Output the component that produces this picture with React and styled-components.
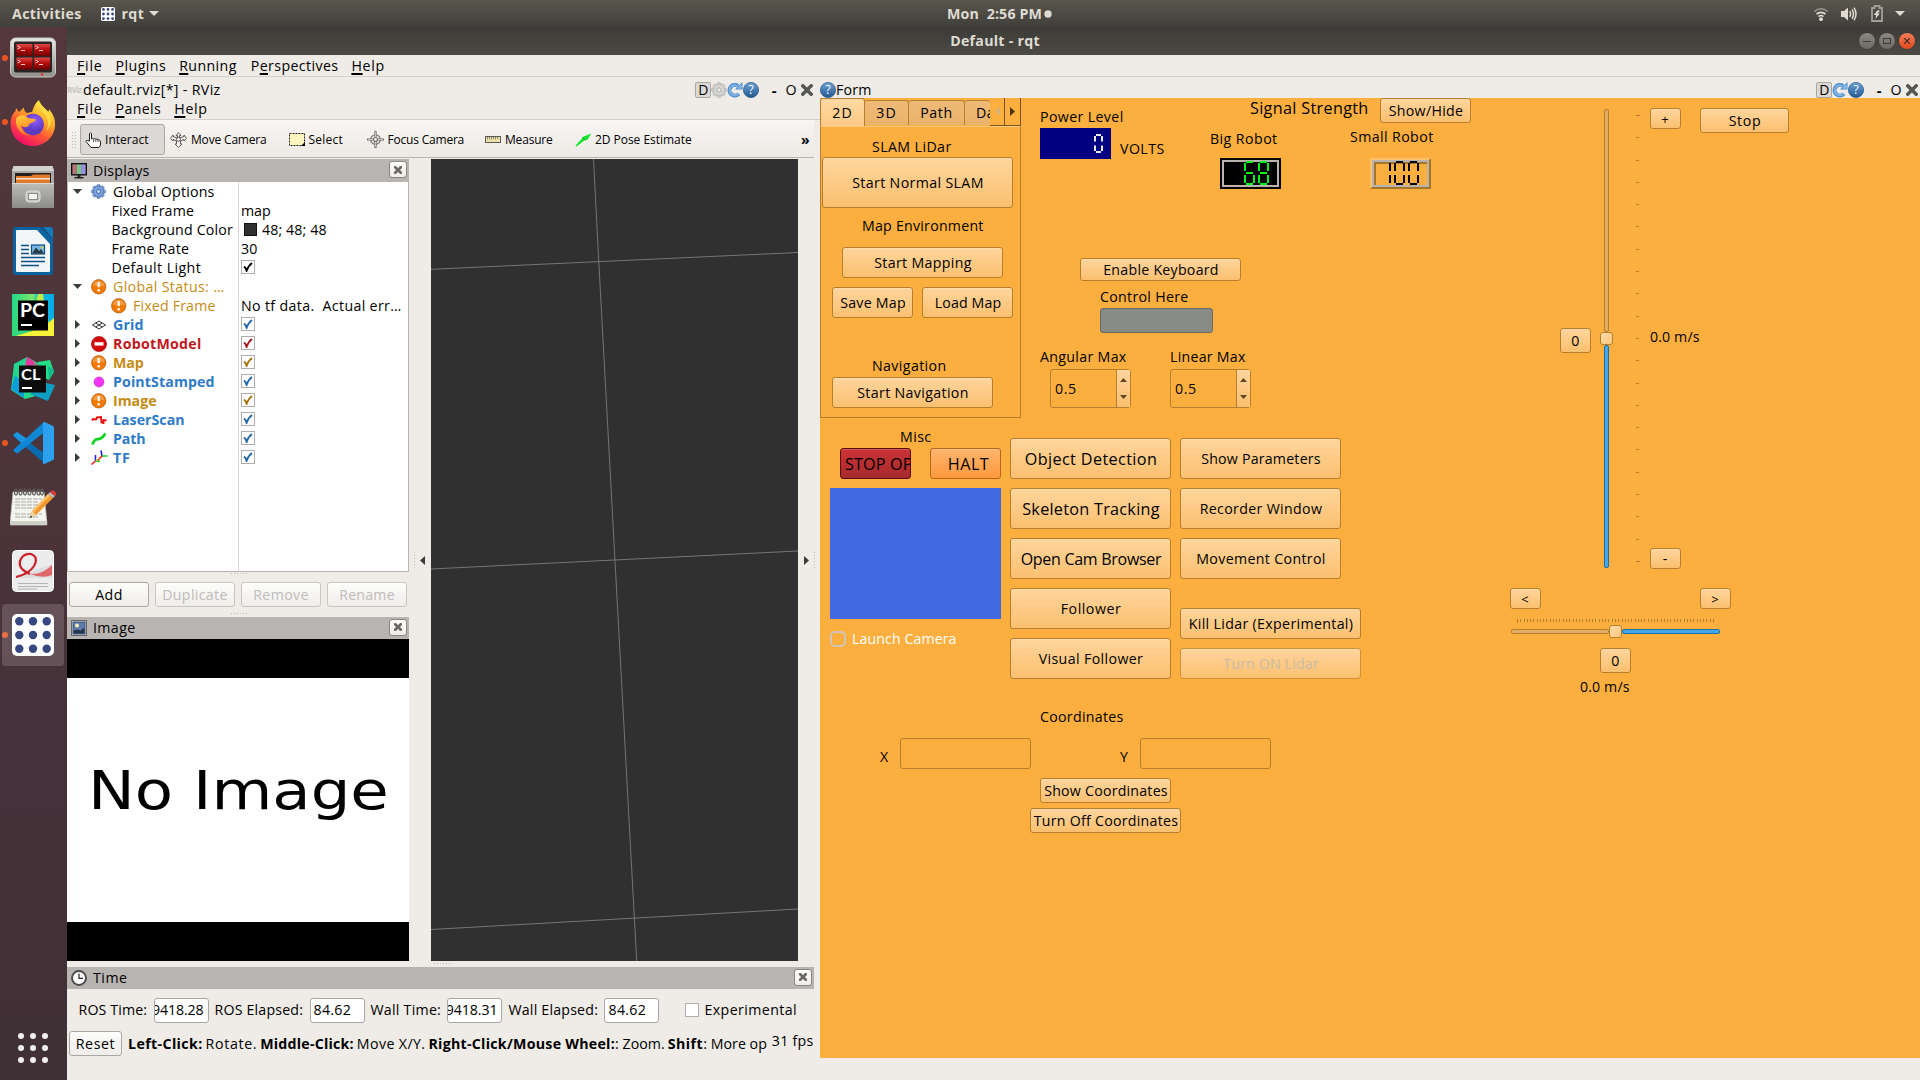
import React, { useLayoutEffect, useRef } from "react";
import styled, { createGlobalStyle, css } from "styled-components";

const Global = createGlobalStyle`
  * { box-sizing: border-box; }
  body { margin: 0; width: 1920px; height: 1080px; overflow: hidden; background: #efebe7; }
  svg { display: block; flex: none; }
`;

const ORANGE = "#fcaf3e";

/* ---------- text ---------- */

const TextSpan = styled.span`
  display: inline-block;
  flex: none;
  white-space: pre;
  font-size: ${(p) => p.$size || 14.2}px;
  font-weight: ${(p) => (p.$bold ? 700 : 400)};
  color: ${(p) => p.$color || "inherit"};
  line-height: 20px;
  height: 20px;
  margin-top: ${(p) => p.$mt || 0}px;
  margin-left: ${(p) => p.$ml || 0}px;
`;

/* Tracks the glyphs so that the run takes up a given width. */
function Text({ w, size, bold, color, mt, ml, children }) {
  const ref = useRef(null);
  useLayoutEffect(() => {
    const el = ref.current;
    if (!w) return;
    el.style.letterSpacing = "0px";
    const natural = el.getBoundingClientRect().width;
    const count = el.textContent.length;
    el.style.letterSpacing = `${(w + 1.6 - natural) / count}px`;
  }, [w, children]);
  return (
    <TextSpan ref={ref} $size={size} $bold={bold} $color={color} $mt={mt} $ml={ml}>
      {children}
    </TextSpan>
  );
}

const U = styled.span`
  text-decoration: underline;
  text-underline-offset: 2px;
  text-decoration-thickness: 1.5px;
`;

/* ---------- generic boxes ---------- */

const Row = styled.div`
  display: flex;
  flex: none;
  align-items: ${(p) => p.$align || "flex-start"};
  gap: ${(p) => p.$gap || 0}px;
  margin: ${(p) => p.$mt || 0}px 0 0 ${(p) => p.$ml || 0}px;
  ${(p) => p.$w && css`width: ${p.$w}px;`}
  ${(p) => p.$h && css`height: ${p.$h}px;`}
`;

const Col = styled(Row)`
  flex-direction: column;
`;

const Screen = styled.div`
  width: 1920px;
  height: 1080px;
  display: flex;
  flex-direction: column;
  background: #efebe7;
  color: #000;
  font-family: "Open Sans", "Noto Sans", sans-serif;
  overflow: hidden;
`;

/* ---------- top bar ---------- */

const TopBar = styled.header`
  height: 27px;
  flex: none;
  display: flex;
  align-items: center;
  color: #dfdbd2;
  padding: 0 15px 0 12px;
  background: linear-gradient(#5a564d, #403f3a);
`;
const TopLeft = styled.div`
  width: 935px;
  display: flex;
  align-items: center;
`;
const TopRight = styled.div`
  margin-left: auto;
  display: flex;
  align-items: center;
`;

function Triangle({ w = 10, h = 5, dir = "down", color = "#dfdbd2", ml = 0 }) {
  const pts = {
    down: `0,0 ${w},0 ${w / 2},${h}`,
    up: `0,${h} ${w},${h} ${w / 2},0`,
    right: `0,0 ${w},${h / 2} 0,${h}`,
    left: `${w},0 0,${h / 2} ${w},${h}`,
  }[dir];
  return (
    <Row $ml={ml}>
      <svg width={w} height={h}><polygon points={pts} fill={color} /></svg>
    </Row>
  );
}

function RqtIcon({ size }) {
  const c = [7.3, 21, 34.7];
  return (
    <svg width={size} height={size} viewBox="0 0 42 42">
      <rect width="42" height="42" rx="5" fill="#fff" />
      {c.map((y) => c.map((x) => <circle key={x + "-" + y} cx={x} cy={y} r="4.2" fill="#37477f" />))}
    </svg>
  );
}

function WifiIcon() {
  return (
    <svg width="16" height="16" viewBox="0 0 16 16" fill="none" stroke="#dfdbd2" strokeWidth="1.7">
      <path d="M1.3 5.6a9.6 9.6 0 0 1 13.4 0" opacity=".45" />
      <path d="M3.5 8.2a6.4 6.4 0 0 1 9 0" />
      <path d="M5.6 10.6a3.4 3.4 0 0 1 4.8 0" />
      <circle cx="8" cy="13.2" r="1.9" fill="#dfdbd2" stroke="none" />
    </svg>
  );
}
function VolumeIcon() {
  return (
    <svg width="16" height="16" viewBox="0 0 16 16" fill="none" stroke="#dfdbd2" strokeWidth="1.5">
      <path d="M0 5h3l4-3.5v13L3 11H0z" fill="#dfdbd2" stroke="none" />
      <path d="M8.7 5.2q1.8 2.8 0 5.6M11 3.4q3 4.6 0 9.2M13 1.6q4 6.4 0 12.8" />
    </svg>
  );
}
function BatteryIcon() {
  return (
    <svg width="12" height="17" viewBox="0 0 12 17">
      <path d="M1 3h2.5V1h5v2H11v13H1z" fill="none" stroke="#a19f98" strokeWidth="1.8" />
      <path d="M6.8 5L2.8 10h2.4l-.8 4 4.4-5.4H6.2L9 6z" fill="#dfdbd2" />
    </svg>
  );
}

/* ---------- dock ---------- */

const Body = styled.div`
  flex: 1;
  min-height: 0;
  display: flex;
`;
const Dock = styled.nav`
  width: 67px;
  flex: none;
  display: flex;
  flex-direction: column;
  background: linear-gradient(#53373c, #4b3439 45%, #45313a 65%, #403136);
`;
const DockTile = styled.div`
  height: 64px;
  flex: none;
  display: flex;
  align-items: center;
  padding-bottom: ${(p) => p.$lift || 0}px;
`;
const RunDot = styled.span`
  width: 6px;
  height: 6px;
  flex: none;
  border-radius: 50%;
  background: ${(p) => (p.$on ? "#e95420" : "transparent")};
`;
const DockFace = styled.div`
  width: 62px;
  height: 62px;
  flex: none;
  display: grid;
  place-items: center;
  border-radius: 4px;
  margin-left: -6px;
  background: ${(p) => (p.$active ? "rgba(255,255,255,.16)" : "transparent")};
`;
const DockInner = styled.div`
  display: flex;
  align-items: center;
  padding-left: 2px;
`;

function Terminator() {
  return (
    <svg width="46" height="42" viewBox="0 0 46 42">
      <defs>
        <linearGradient id="tr" x2="0" y2="1"><stop stopColor="#e04a4a" /><stop offset=".45" stopColor="#b80d0d" /><stop offset="1" stopColor="#6d0000" /></linearGradient>
        <linearGradient id="tf" x2="0" y2="1"><stop stopColor="#e6e6e2" /><stop offset="1" stopColor="#8f8f8b" /></linearGradient>
      </defs>
      <rect x=".5" y="1" width="45" height="39" rx="5" fill="url(#tf)" stroke="#c9c9c5" />
      <rect x="4" y="4.5" width="38" height="31" rx="2" fill="#2b2422" />
      <g fill="url(#tr)">
        <rect x="6.5" y="7" width="16" height="12" /><rect x="24" y="7" width="16" height="12" />
        <rect x="6.5" y="20.500" width="16" height="12" /><rect x="24" y="20.500" width="16" height="12" />
      </g>
      <g fill="none" stroke="#f3c6c6" strokeWidth="1">
        <path d="M7.500 9l3 1.500-3 1.500M11 13.500h4M25.500 9l3 1.500-3 1.500M29 13.500h4M7.500 23l3 1.500-3 1.500M11 27.500h4M25.500 23l3 1.500-3 1.500M29 27.500h4" />
      </g>
      <circle cx="32" cy="37.500" r="1.200" fill="#e22" />
    </svg>
  );
}
function Firefox() {
  return (
    <svg width="46" height="47" viewBox="0 0 46 47">
      <defs>
        <linearGradient id="ff1" x1=".85" y1=".05" x2=".3" y2="1"><stop stopColor="#fff44f" /><stop offset=".35" stopColor="#ffb02a" /><stop offset=".62" stopColor="#ff5a33" /><stop offset="1" stopColor="#f0096b" /></linearGradient>
        <radialGradient id="ff2" cx=".6" cy=".3"><stop stopColor="#9059ff" /><stop offset="1" stopColor="#5b3bc0" /></radialGradient>
        <linearGradient id="ff3" x2=".4" y2="1"><stop stopColor="#ffd23c" /><stop offset="1" stopColor="#ff7a24" /></linearGradient>
      </defs>
      <path d="M29 1c1 5 6 8 9 12 1-1 1-2 1-3 4 5 6.500 10 6 17-1 12-11 20-22.500 20S1 38 .5 26C.300 19 3 14 5.500 12l.5-3c1.500 1 2 3 3 4l5-4.500c0 3 1 4.500 3 5.500l5-1c2-5 3-9 7-12z" fill="url(#ff1)" />
      <circle cx="23" cy="25.500" r="10.800" fill="url(#ff2)" />
      <path d="M30 3c-1 5 2 8 5 12 4 6 4 12 1 17 5-4 6-11 3-18C36 9 31 7 30 3z" fill="#ffe04a" opacity=".8" />
      <path d="M6 20c3-5 9-4.500 12-1 3 1 7 0 8 2-2 3-6 2.500-7 5-1 3-6 3-8 0 0 5 4 9 10 10-8 2-16-6-15-16z" fill="url(#ff3)" />
    </svg>
  );
}
function Files() {
  return (
    <svg width="42" height="44" viewBox="0 0 42 44">
      <defs><linearGradient id="fg" x2="0" y2="1"><stop stopColor="#bdbdbb" /><stop offset="1" stopColor="#8b8b89" /></linearGradient></defs>
      <path d="M1.500 1h39L42 6v37H0V6z" fill="#a9a9a7" />
      <path d="M1.500 1h39L42 6H0z" fill="#d2d2d0" />
      <rect x="3" y="8" width="36" height="10" fill="#26211f" />
      <path d="M4 11h15l2-1.500h17V18H4z" fill="#e07b2c" />
      <rect x="4" y="13" width="34" height="1.500" fill="#fbe2c8" />
      <path d="M0 18h42v25H0z" fill="url(#fg)" />
      <path d="M0 18h42v1H0z" fill="#d8d8d6" />
      <rect x="14" y="26" width="14" height="11" rx="3" fill="#c6c6c4" stroke="#dededc" />
      <rect x="16.500" y="28.500" width="9" height="6" fill="#f4f4f2" stroke="#8a8a88" />
    </svg>
  );
}
function Writer() {
  return (
    <svg width="40" height="48" viewBox="0 0 40 48">
      <path d="M3 0h25l12 12v33q0 3-3 3H3q-3 0-3-3V3q0-3 3-3z" fill="#0b639f" />
      <path d="M28 0h12v12z" fill="#0a4776" /><path d="M30 0h7q3 0 3 3v9z" fill="#1579b8" />
      <path d="M3 4q0-1 1-1h20l13 14v27q0 1-1 1H4q-1 0-1-1z" fill="#f3f6f8" />
      <path d="M8 18.500h8M8 22.500h8M8 26.500h8M8 30.500h24M8 34.500h24M8 38.500h18" stroke="#0b5184" strokeWidth="1.700" />
      <rect x="18.500" y="18" width="13" height="9" fill="#76b7e8" stroke="#0b5184" strokeWidth="1.200" />
      <path d="M19 26.500l4-6 3 3.500 2-2 3 4.500z" fill="#2b3b40" />
      <circle cx="29" cy="20.500" r="1.200" fill="#f7cf2e" />
    </svg>
  );
}
function PyCharm() {
  return (
    <svg width="42" height="42" viewBox="0 0 42 42">
      <defs><linearGradient id="pc"><stop stopColor="#21d789" /><stop offset=".5" stopColor="#7fe66c" /><stop offset=".6" stopColor="#12c4d8" /><stop offset="1" stopColor="#07a9e8" /></linearGradient></defs>
      <rect width="42" height="42" fill="url(#pc)" />
      <path d="M0 26L28 0l4 8 5 20 5 2v12H0z" fill="#35d77c" />
      <path d="M42 24v18H4l26-8z" fill="#f6f23a" /><path d="M26 0h5l1 8-8 1z" fill="#c6ec44" />
      <rect x="6" y="6.500" width="30" height="30" fill="#000" />
      <text x="8" y="22.500" fontSize="18" fontWeight="700" fontFamily="Lato, Open Sans, sans-serif" fill="#fff" textLength="25" lengthAdjust="spacingAndGlyphs">PC</text>
      <rect x="9" y="30" width="11" height="2" fill="#fff" />
    </svg>
  );
}
function CLion() {
  return (
    <svg width="46" height="46" viewBox="0 0 46 46">
      <path d="M4 8L17 1l11 6-4 12 14 10-5 9-18 5L1 34z" fill="#22d88f" />
      <path d="M28 6l12-2 4 12-5 8-13-6z" fill="#22dc86" />
      <path d="M1 33L5 20l9 6v16z" fill="#0a9fd8" />
      <path d="M20 38l16-11 9 2-7 16z" fill="#0b9fc4" /><path d="M38 10l6 4-5 9z" fill="#11b98e" />
      <path d="M17 1l8 5-3 6-7-3z" fill="#e0389c" /><path d="M25 6l4 4-6 2z" fill="#a7787f" />
      <rect x="9" y="9.500" width="27" height="27" fill="#0c0c0c" />
      <text x="11" y="23.500" fontSize="15" fontWeight="700" fontFamily="Lato, Open Sans, sans-serif" fill="#fff" textLength="19.500" lengthAdjust="spacingAndGlyphs">CL</text>
      <rect x="12" y="31" width="10" height="2" fill="#fff" />
    </svg>
  );
}
function Code() {
  return (
    <svg width="42" height="42" viewBox="0 0 42 42">
      <path d="M1 14l3-3q1-1 2 0l26 20v10z" fill="#0a6cb0" />
      <path d="M1 28l3 3q1 1 2 0L32 11V0z" fill="#0f87d4" />
      <path d="M1 13l3-2.500q1-.5 2 0L15 17l-5.500 4z" fill="#1a96e2" />
      <path d="M31 .300q1-.5 2 0L41 4q1 .5 1 1.500v31q0 1-1 1.500l-8 3.700q-1 .5-2 0z" fill="#2ba1f0" />
      <path d="M31 11.500v19L18.500 21z" fill="#4b3439" />
    </svg>
  );
}
function Gedit() {
  const lines = [12, 15, 18, 21, 27, 30];
  return (
    <svg width="46" height="38" viewBox="0 0 46 38">
      <path d="M3 4h31l3 32q0 1-1 1H1q-1 0-1-1z" fill="#f5f5f0" stroke="#bdbdb5" strokeWidth=".8" />
      <path d="M0 33h37v3q0 1-1 1H1q-1 0-1-1z" fill="#cfcfc8" />
      {[6, 10.5, 15, 19.5, 24, 28.5, 32].map((x) => <ellipse key={x} cx={x} cy="4" rx="1.500" ry="3" fill="none" stroke="#5d5d5a" strokeWidth="1.200" />)}
      {lines.map((y, i) => <path key={y} d={`M5 ${y - 1}h${i % 2 ? 23 : 27}`} stroke="#a8a8a3" strokeWidth="1" strokeDasharray="5 1" />)}
      <path d="M38 6l5 4-17 17-6 3 2-7z" fill="#f29a2e" /><path d="M38 6l2 1.700-17 17L22 23z" fill="#fcc46c" />
      <path d="M22 23l4 4-6 3z" fill="#f0d3a5" /><path d="M20 30l.8-2.500 1.500 1.600z" fill="#222" />
      <path d="M38 6l2-2 5 4-2 2z" fill="#b9b9b9" /><path d="M40 4q2-3 5-.5t0 4.500z" fill="#d83a3a" />
    </svg>
  );
}
function Evince() {
  return (
    <svg width="42" height="42" viewBox="0 0 42 42">
      <rect x=".5" y=".5" width="41" height="41" rx="4" fill="#ececec" stroke="#fff" />
      <path d="M2 28L40 14v14H2z" fill="#dedede" />
      <path d="M6 33.500h30M6 36.500h30M6 39h19" stroke="#b5b5b5" strokeWidth="1" />
      <path d="M40 15Q30 25 18 24q13 5 22 1z" fill="#e0676a" />
      <path d="M18 24Q6 19 8 11q3-8 11-7 8 3 3 12-5 8-18 11" fill="none" stroke="#c9242b" strokeWidth="2.200" />
    </svg>
  );
}
function AppsGrid() {
  const c = [3, 15, 27];
  return (
    <svg width="30" height="30">
      {c.map((y) => c.map((x) => <circle key={x + "-" + y} cx={x} cy={y} r="3" fill="#f2f0ee" />))}
    </svg>
  );
}
const AppsButton = styled.div`
  margin: auto 0 17px 18px;
`;

const DOCK = [
  [<Terminator />, true], [<Firefox />, true], [<Files />], [<Writer />], [<PyCharm />],
  [<CLion />], [<Code />, true], [<Gedit />], [<Evince />], [<RqtIcon size={42} />, true, true],
];

/* ---------- window chrome ---------- */

const Window = styled.main`
  flex: 1;
  min-width: 0;
  display: flex;
  flex-direction: column;
`;
const TitleBar = styled.div`
  height: 28px;
  flex: none;
  display: grid;
  grid-template-columns: 1fr auto 1fr;
  align-items: center;
  padding: 0 5px 0 8px;
  background: linear-gradient(#3c3b37, #4c4a45);
  color: #dfdbd2;
`;
const WinButtons = styled.div`
  justify-self: end;
  display: flex;
  gap: 4px;
`;
const WinButton = styled.span`
  width: 16px;
  height: 16px;
  border-radius: 50%;
  display: grid;
  place-items: center;
  background: ${(p) => (p.$close ? "linear-gradient(#f47c5a, #df4a1c)" : "linear-gradient(#8b8880, #6b6963)")};
  box-shadow: 0 0 0 0.5px #33322e;
`;
const MenuBar = styled.div`
  height: ${(p) => p.$h}px;
  flex: none;
  display: flex;
  align-items: center;
  padding-left: 10px;
  border-bottom: 1px solid #d3d0cc;
`;
const Panels = styled.div`
  flex: 1;
  display: flex;
  min-height: 0;
`;
const DockTitle = styled.div`
  height: 21px;
  flex: none;
  display: flex;
  align-items: center;
  padding: 5px ${(p) => p.$pr}px 0 0;
`;
const TitleTools = styled.div`
  margin-left: auto;
  display: flex;
  align-items: center;
  height: 17px;
`;
const DButton = styled.span`
  width: 16px;
  height: 16px;
  display: grid;
  place-items: center;
  font-size: 14px;
  line-height: 14px;
  border: 1px solid #aaa6a2;
  border-radius: 2px;
  background: #dcd8d5;
`;

function Gear({ size = 16, fill = "#d8d8d6", stroke = "#a9a9a7", hub = "#efebe7" }) {
  return (
    <svg width={size} height={size} viewBox="-8 -8 16 16">
      <g fill={fill} stroke={stroke} strokeWidth=".7">
        {[0, 45, 90, 135].map((a) => <rect key={a} x="-1.700" y="-7.300" width="3.400" height="14.600" rx=".6" transform={`rotate(${a})`} />)}
        <circle r="5.400" />
      </g>
      <circle r="4.900" fill={fill} />
      <circle r="2.200" fill={hub} stroke={stroke} />
    </svg>
  );
}
function Reload() {
  return (
    <svg width="16" height="16" viewBox="0 0 16 16">
      <path d="M11.800 11.700A5.300 5.300 0 1 1 11 4" fill="none" stroke="#4d8dcb" strokeWidth="4" />
      <path d="M15.500 0v7.500H8z" fill="#4d8dcb" />
      <path d="M11.400 11.500A5 5 0 1 1 11 4.500" fill="none" stroke="#7fb2e4" strokeWidth="2" />
      <path d="M14.700 2v4.700H10z" fill="#8bbbe9" />
    </svg>
  );
}
function HelpIcon() {
  return (
    <svg width="16" height="16" viewBox="0 0 16 16">
      <defs><linearGradient id="hp" x2="0" y2="1"><stop stopColor="#6ea3d6" /><stop offset="1" stopColor="#23588f" /></linearGradient></defs>
      <circle cx="8" cy="8" r="7.600" fill="url(#hp)" stroke="#1f5187" strokeWidth=".7" />
      <text x="8" y="12.300" textAnchor="middle" fontSize="12" fontFamily="Open Sans, sans-serif" fill="#fff">?</text>
    </svg>
  );
}
function Cross({ size = 12, w = 3.4, color = "#555753" }) {
  return (
    <svg width={size} height={size} viewBox="0 0 12 12">
      <path d="M1.800 1.800l8.400 8.400M10.200 1.800l-8.400 8.400" stroke={color} strokeWidth={w} strokeLinecap="square" />
    </svg>
  );
}
function Tools({ gear }) {
  return (
    <TitleTools>
      <DButton>D</DButton>
      {gear && <Gear />}
      <Reload />
      <HelpIcon />
      <Text w={5} ml={12.5} size={15} bold>-</Text>
      <Text w={11} ml={7}>O</Text>
      <Row $ml={3}><Cross /></Row>
    </TitleTools>
  );
}

/* ---------- rviz ---------- */

const Rviz = styled.section`
  width: 753px;
  flex: none;
  display: flex;
  flex-direction: column;
`;
const RvizLogo = styled.span`
  width: 16px;
  font-size: 8px;
  font-weight: 700;
  letter-spacing: -0.6px;
  line-height: 14px;
  color: #c9c6c2;
  overflow: hidden;
`;
const Toolbar = styled.div`
  width: 747px;
  height: 38px;
  flex: none;
  display: flex;
  align-items: center;
  padding: 2px 0 0 4px;
  margin-bottom: 1px;
  background: linear-gradient(#f8f5f2, #edeae6);
  border-bottom: 1px solid #b8b4b0;
`;
const Grip = styled.span`
  width: 5px;
  height: 17px;
  flex: none;
  background: radial-gradient(circle, #b9b5b1 0.7px, transparent 1px) 0 0 / 3px 3px;
`;
const Tool = styled.div`
  height: 31px;
  width: ${(p) => p.$w}px;
  flex: none;
  display: flex;
  align-items: center;
  gap: 4px;
  padding-left: 4px;
  border-radius: 3px;
  border: 1px solid ${(p) => (p.$on ? "#aba7a3" : "transparent")};
  background: ${(p) => (p.$on ? "#dbd8d5" : "transparent")};
`;

const HandIcon = () => (
  <svg width="16" height="16" viewBox="0 0 16 16"><path d="M4.500 9V1.500q1-1.200 2 0V7q1.200-1 2.200 0 1.200-.8 2.200.3 1.200-.8 2 .2l1.300.6q1.300.4 1.300 1.900V13l-1.500 2.500H6L1 9.500q0-1.500 1.500-1z" fill="#fff" stroke="#222" strokeWidth="1" /><path d="M8.500 7.500v2.500M10.800 7.500V10M13 8v2" stroke="#222" strokeWidth=".8" /></svg>
);
const MoveIcon = () => (
  <svg width="17" height="16" viewBox="0 0 17 16" fill="#f2f0ed" stroke="#4d4d4d" strokeWidth=".9"><path d="M8.500.600l2.500 3H9.500v2.500L14 4.500V3l2.500 3.500L14 9V7.500L10.500 9v3H12l-3.500 3.500L5 12h1.500V9L3 7.500V9L.5 6.500 3 3v1.500l4.500 1.600V3.600H6z" /><circle cx="8.500" cy="7.300" r="2" /></svg>
);
const SelectIcon = () => (
  <svg width="16" height="13" viewBox="0 0 16 13"><rect x=".5" y=".5" width="15" height="12" fill="#fdf6bf" stroke="#222" strokeDasharray="2 1" /><path d="M16 9v4h-4z" fill="#000" /></svg>
);
const FocusIcon = () => (
  <svg width="17" height="17" viewBox="0 0 17 17" fill="none" stroke="#6b6b6b" strokeWidth="1.100"><circle cx="8.500" cy="8.500" r="4.800" /><circle cx="8.500" cy="8.500" r="2" /><path d="M8.500 0v6M8.500 11v6M0 8.500h6M11 8.500h6" strokeWidth="2.200" /><path d="M8.500 1v5M8.500 11v5M1 8.500h5M11 8.500h5" stroke="#ddd" strokeWidth=".8" /></svg>
);
const MeasureIcon = () => (
  <svg width="16" height="7" viewBox="0 0 16 7"><rect x=".5" y=".5" width="15" height="6" fill="#ece2a8" stroke="#5a5a56" /><path d="M2.500 1v2.500M4.500 1v2M6.500 1v2.500M8.500 1v2M10.500 1v2.500M12.500 1v2" stroke="#77735a" strokeWidth=".8" /></svg>
);
const PoseIcon = () => (
  <svg width="16" height="14" viewBox="0 0 16 14"><path d="M16 .500L12.500 7l-2-.5-9 7-1-1L8 4.500 7.500 4z" fill="#0fe62b" /><path d="M7.500 4.500l3 3" stroke="#0a8a1a" /></svg>
);

const RvizMain = styled.div`
  display: flex;
  height: 802px;
  flex: none;
`;
const Side = styled.div`
  width: 342px;
  flex: none;
  display: flex;
  flex-direction: column;
`;
const PanelHead = styled.div`
  height: ${(p) => p.$h}px;
  flex: none;
  width: ${(p) => p.$w}px;
  display: flex;
  align-items: center;
  gap: 6px;
  padding: 0 2px 0 4px;
  background: #b8b4b1;
`;
const CloseBox = styled.span`
  width: 18px;
  height: 17px;
  margin: 0 0 2px auto;
  display: grid;
  place-items: center;
  border: 1px solid #8a8784;
  border-radius: 3px;
  background: linear-gradient(#fff, #eeecea);
`;
const Tree = styled.div`
  height: 390px;
  flex: none;
  display: flex;
  border: 1px solid #b8b4b1;
  border-top: 0;
  background: #fff;
`;
const NameCol = styled.div`
  width: 171px;
  flex: none;
  border-right: 1px solid #dad8d6;
`;
const ValueCol = styled.div`
  flex: 1;
  padding-left: 2px;
`;
const Cell = styled.div`
  height: 19px;
  display: flex;
  align-items: center;
  padding-left: ${(p) => p.$pl || 0}px;
`;
const ArrowSlot = styled.span`
  width: 18px;
  flex: none;
`;
const IconSlot = styled.span`
  width: 17px;
  flex: none;
`;
const Swatch = styled.span`
  width: 13px;
  height: 13px;
  margin: 0 5px 0 3px;
  background: #303030;
  border: 1px solid #111;
`;
const CheckBox = styled.span`
  width: 14px;
  height: 14px;
  flex: none;
  display: grid;
  place-items: center;
  border: 1px solid #b1adaa;
  background: #fff;
`;
const CheckSlot = styled.span`
  padding-bottom: 1px;
`;
function Check({ color }) {
  return (
    <CheckSlot>
      <CheckBox>
        <svg width="10" height="10" viewBox="0 0 10 10"><path d="M1 4.500Q3 6 3.600 8.800 5.500 3.500 9 1" fill="none" stroke={color} strokeWidth="1.900" /></svg>
      </CheckBox>
    </CheckSlot>
  );
}

const Warn = () => (
  <svg width="16" height="16" viewBox="0 0 16 16"><circle cx="7.700" cy="7.800" r="7.200" fill="#f57900" stroke="#a85b12" strokeWidth=".7" /><path d="M1.800 7a6 6 0 0 1 11.800 0z" fill="#fff" opacity=".25" /><path d="M7.700 3v5.200" stroke="#fff" strokeWidth="2.200" /><circle cx="7.700" cy="11.300" r="1.300" fill="#fff" /></svg>
);
const ErrorIcon = () => (
  <svg width="16" height="16" viewBox="0 0 16 16"><circle cx="8" cy="8" r="7.600" fill="#d40b0b" stroke="#9a0505" strokeWidth=".6" /><rect x="3.500" y="6.200" width="9" height="3.400" fill="#fff" /></svg>
);
const GridIcon = () => (
  <svg width="16" height="10" viewBox="0 0 16 10" fill="none" stroke="#333" strokeWidth="1"><path d="M1.500 5L8 1l6.500 4L8 9zM4.700 3l6.600 4M11.300 3L4.700 7" /></svg>
);
const DotIcon = () => (
  <svg width="16" height="12" viewBox="0 0 16 12"><circle cx="8" cy="6" r="5" fill="#f535f5" stroke="#b92ab9" strokeWidth=".6" /></svg>
);
const ScanIcon = () => (
  <svg width="17" height="10" viewBox="0 0 17 10"><path d="M1 5.500l1-1.500 3 .5 1-2 4-.5.500 5.500 2 .5V5l3 .5" fill="none" stroke="#f00a0a" strokeWidth="1.900" /></svg>
);
const PathIcon = () => (
  <svg width="16" height="14" viewBox="0 0 16 14"><path d="M1.500 12.500C3.500 6 6 8 9.500 6.500 13 5 12.500 3 14.500 1.500" fill="none" stroke="#0fd41a" strokeWidth="2.800" /></svg>
);
const TfIcon = () => (
  <svg width="17" height="15" viewBox="0 0 17 15" fill="none" strokeWidth="1.500"><path d="M4.500 11V5M11 6L10 .500" stroke="#1a1af0" /><path d="M4.500 11l4.500.5M11 6h5.500" stroke="#19d819" /><path d="M4.500 11L.5 14.500M11 6L6.500 10.500" stroke="#e8141a" /><path d="M4.500 11l4-3" stroke="#e8c414" strokeWidth="1" /></svg>
);
const MonitorIcon = () => (
  <svg width="16" height="16" viewBox="0 0 16 16"><rect x=".5" y=".5" width="15" height="11.500" fill="#333" stroke="#111" /><rect x="1.500" y="1.500" width="4.400" height="9.500" fill="#b5757b" /><rect x="5.900" y="1.500" width="4.200" height="9.500" fill="#7cc48a" /><rect x="10.100" y="1.500" width="4.400" height="9.500" fill="#9a95e0" /><path d="M6.500 12h3v2h3v1.500h-9V14h3z" fill="#222" /></svg>
);
const PictureIcon = () => (
  <svg width="16" height="16" viewBox="0 0 16 16"><rect x=".5" y=".5" width="15" height="15" fill="#eee" stroke="#666" /><rect x="2" y="2" width="12" height="12" fill="#5f7eae" stroke="#344a70" /><path d="M2.500 13.500v-3l4-1 3 1 3-2.500 1 1.500v4z" fill="#28364e" /><circle cx="6" cy="5.500" r="2" fill="#f3f0b8" /></svg>
);
const ClockIcon = () => (
  <svg width="16" height="16" viewBox="0 0 16 16"><circle cx="8" cy="8" r="7" fill="#fff" stroke="#4b4b4b" strokeWidth="1.900" /><path d="M8 3.500V8.300h4" fill="none" stroke="#222" strokeWidth="1.200" /></svg>
);

const WARN = "#c68b13", OK = "#2d7ac8", ERR = "#c2181d";
const TREE = [
  { open: true, icon: <Gear size={15} fill="#7ea3dc" stroke="#3f66a5" hub="#c8d8f2" />, text: "Global Options", w: 100 },
  { pl: 43.5, text: "Fixed Frame", w: 81, value: <Text w={28}>map</Text> },
  { pl: 43.5, text: "Background Color", w: 120, value: <><Swatch /><Text w={63}>48; 48; 48</Text></> },
  { pl: 43.5, text: "Frame Rate", w: 76, value: <Text w={15}>30</Text> },
  { pl: 43.5, text: "Default Light", w: 88, value: <Check color="#000" /> },
  { open: true, icon: <Warn />, text: "Global Status: …", w: 110, color: WARN },
  { pl: 43, icon: <Warn />, text: "Fixed Frame", w: 81, color: WARN, value: <Text w={159}>No tf data.  Actual err…</Text> },
  { closed: true, icon: <GridIcon />, text: "Grid", w: 29, color: OK, bold: true, value: <Check color="#2167ab" /> },
  { closed: true, icon: <ErrorIcon />, text: "RobotModel", w: 87, color: ERR, bold: true, value: <Check color="#a3161b" /> },
  { closed: true, icon: <Warn />, text: "Map", w: 29, color: WARN, bold: true, value: <Check color="#a8750c" /> },
  { closed: true, icon: <DotIcon />, text: "PointStamped", w: 100, color: OK, bold: true, value: <Check color="#2167ab" /> },
  { closed: true, icon: <Warn />, text: "Image", w: 42, color: WARN, bold: true, value: <Check color="#a8750c" /> },
  { closed: true, icon: <ScanIcon />, text: "LaserScan", w: 70, color: OK, bold: true, value: <Check color="#2167ab" /> },
  { closed: true, icon: <PathIcon />, text: "Path", w: 31, color: OK, bold: true, value: <Check color="#2167ab" /> },
  { closed: true, icon: <TfIcon />, text: "TF", w: 16, color: OK, bold: true, value: <Check color="#2167ab" /> },
];

const HDots = styled.span`
  display: block;
  width: 17px;
  height: 2px;
  flex: none;
  margin: ${(p) => p.$m};
  background: repeating-linear-gradient(90deg, #bbb7b3 0 1px, transparent 1px 3px);
  clip-path: inset(0 0 1px 0);
`;
const VDots = styled.span`
  display: block;
  width: 1px;
  height: 17px;
  flex: none;
  background: repeating-linear-gradient(#bbb7b3 0 1px, transparent 1px 3px);
`;
const SideButtons = styled.div`
  display: flex;
  gap: 6px;
  padding: 0 2px;
`;
const GreyButton = styled.button`
  width: ${(p) => p.$w}px;
  height: ${(p) => p.$h || 25}px;
  flex: none;
  padding: 0;
  display: grid;
  place-items: center;
  font-family: inherit;
  color: ${(p) => (p.$off ? "#bfbcb9" : "#000")};
  border: 1px solid ${(p) => (p.$off ? "#c9c5c2" : "#aaa6a2")};
  border-radius: 3px;
  background: linear-gradient(#fdfdfc, #efedea);
`;
const ImageView = styled.div`
  height: 322px;
  flex: none;
  display: flex;
  align-items: center;
  justify-content: center;
  border: solid #000;
  border-width: 39px 0;
  background: #fff;
`;
const NoImage = styled.span`
  font: 53px/60px "DejaVu Sans", sans-serif;
  white-space: pre;
  padding-bottom: 18px;
  transform: scaleX(1.18);
`;
const Splitter = styled.div`
  width: ${(p) => p.$w}px;
  flex: none;
  display: flex;
  align-items: center;
  justify-content: center;
  gap: 5px;
`;
const TimeRow = styled.div`
  width: 747px;
  height: 42px;
  flex: none;
  display: flex;
  align-items: center;
  padding-left: 11.5px;
`;
const Field = styled.div`
  width: 55px;
  height: 25px;
  flex: none;
  margin: 0 6px 0 6.4px;
  display: flex;
  align-items: center;
  justify-content: ${(p) => (p.$end ? "flex-end" : "flex-start")};
  padding: 0 4px 0 3px;
  overflow: hidden;
  border: 1px solid #aaa6a2;
  border-radius: 3px;
  background: #fff;
`;
const StatusRow = styled.div`
  width: 747px;
  display: flex;
  align-items: center;
  padding-left: 2px;
`;

const TOOLS = [
  [85, <HandIcon />, "Interact", 42, true],
  [118.5, <MoveIcon />, "Move Camera", 74],
  [78, <SelectIcon />, "Select", 33],
  [118.5, <FocusIcon />, "Focus Camera", 75],
  [90, <MeasureIcon />, "Measure", 46],
  [130, <PoseIcon />, "2D Pose Estimate", 95],
];

function RvizPanel() {
  return (
    <Rviz>
      <DockTitle $pr={7}>
        <RvizLogo>RViz</RvizLogo>
        <Text w={136}>default.rviz[*] - RViz</Text>
        <Tools gear />
      </DockTitle>
      <MenuBar $h={22}>
        <Text w={24}><U>F</U>ile</Text>
        <Text w={44} ml={13}><U>P</U>anels</Text>
        <Text w={32} ml={13}><U>H</U>elp</Text>
      </MenuBar>
      <Toolbar>
        <Grip />
        <Row $ml={4} $align="center">
          {TOOLS.map(([w, icon, label, tw, on]) => (
            <Tool key={label} $w={w} $on={on}>{icon}<Text w={tw} size={12}>{label}</Text></Tool>
          ))}
        </Row>
        <Text ml={101} size={14} bold>»</Text>
      </Toolbar>
      <RvizMain>
        <Side>
          <PanelHead $h={23} $w={342}>
            <MonitorIcon /><Text w={55}>Displays</Text>
            <CloseBox><Cross size={8} w={4} color="#6b6966" /></CloseBox>
          </PanelHead>
          <Tree>
            <NameCol>
              {TREE.map((r, i) => (
                <Cell key={i} $pl={r.pl || 5}>
                  {!r.pl && <ArrowSlot>{r.open ? <Triangle w={9} h={5} color="#3c3c3c" /> : <Row $ml={2}><Triangle w={5} h={9} dir="right" color="#3c3c3c" /></Row>}</ArrowSlot>}
                  {r.icon && <IconSlot>{r.icon}</IconSlot>}
                  <Text w={r.w} color={r.color} bold={r.bold} ml={r.icon ? 5 : 0}>{r.text}</Text>
                </Cell>
              ))}
            </NameCol>
            <ValueCol>{TREE.map((r, i) => <Cell key={i}>{r.value}</Cell>)}</ValueCol>
          </Tree>
          <HDots $m="1px 0 7px 164px" />
          <SideButtons>
            <GreyButton $w={80}><Text w={26}>Add</Text></GreyButton>
            <GreyButton $w={80} $off><Text w={64}>Duplicate</Text></GreyButton>
            <GreyButton $w={80} $off><Text w={54}>Remove</Text></GreyButton>
            <GreyButton $w={80} $off><Text w={54}>Rename</Text></GreyButton>
          </SideButtons>
          <HDots $m="6px 0 2px 164px" />
          <PanelHead $h={22} $w={342}>
            <PictureIcon /><Text w={41}>Image</Text>
            <CloseBox><Cross size={8} w={4} color="#6b6966" /></CloseBox>
          </PanelHead>
          <ImageView><NoImage>No Image</NoImage></ImageView>
        </Side>
        <Splitter $w={20}>
          <VDots />
          <Triangle w={5} h={9} dir="left" color="#3c3c3c" />
        </Splitter>
        <Row $ml={2}>
          <svg width="367" height="802" viewBox="431 159 367 802">
            <rect x="431" y="159" width="367" height="802" fill="#303030" />
            <path d="M593.500 159L598.800 262 636.700 961M431 269.300L798 252.500M431 569L798 551M431 929.500L798 909" stroke="#757575" strokeWidth="1" fill="none" />
          </svg>
        </Row>
        <Splitter $w={22}>
          <Triangle w={5} h={9} dir="right" color="#3c3c3c" />
          <VDots />
        </Splitter>
      </RvizMain>
      <HDots $m="2px 0 2px 367px" />
      <PanelHead $h={22} $w={747}>
        <ClockIcon /><Text w={33}>Time</Text>
        <CloseBox><Cross size={8} w={4} color="#6b6966" /></CloseBox>
      </PanelHead>
      <TimeRow>
        <Text w={67}>ROS Time:</Text>
        <Field $end><Text w={58}>99418.28</Text></Field>
        <Text w={87}>ROS Elapsed:</Text>
        <Field><Text w={36}>84.62</Text></Field>
        <Text w={69}>Wall Time:</Text>
        <Field $end><Text w={58}>99418.31</Text></Field>
        <Text w={88}>Wall Elapsed:</Text>
        <Field><Text w={36}>84.62</Text></Field>
        <Row $ml={20}><CheckBox /></Row>
        <Text w={91} ml={5}>Experimental</Text>
      </TimeRow>
      <StatusRow>
        <GreyButton $w={53}><Text w={38}>Reset</Text></GreyButton>
        <Text w={73} ml={6} bold>Left-Click:</Text>
        <Text w={50} ml={3}>Rotate.</Text>
        <Text w={92} ml={3} bold>Middle-Click:</Text>
        <Text w={67} ml={3}>Move X/Y.</Text>
        <Text w={185} ml={3} bold>Right-Click/Mouse Wheel:</Text>
        <Text w={48}>: Zoom.</Text>
        <Text w={34} ml={3} bold>Shift</Text>
        <Text w={62}>: More op</Text>
        <Row $ml={5} $h={25}><Text w={40}>31 fps</Text></Row>
      </StatusRow>
    </Rviz>
  );
}

/* ---------- form ---------- */

const Form = styled.section`
  flex: 1;
  display: flex;
  flex-direction: column;
`;
const Sheet = styled.div`
  height: 960px;
  flex: none;
  display: flex;
  background: ${ORANGE};
`;
const EDGE = "#b57f2e";
const Button = styled.button`
  width: ${(p) => p.$w}px;
  height: ${(p) => p.$h}px;
  flex: none;
  margin: ${(p) => p.$mt || 0}px 0 0 ${(p) => p.$ml || 0}px;
  padding: 0;
  display: flex;
  align-items: center;
  justify-content: ${(p) => (p.$clip ? "flex-start" : "center")};
  overflow: hidden;
  font-family: inherit;
  color: ${(p) => (p.$tone === "off" ? "#c9bba7" : "#000")};
  border-radius: 3px;
  border: 1px solid ${EDGE};
  box-shadow: inset 0 1px 0 rgba(255, 255, 255, 0.18);
  background: linear-gradient(#ffd59c, #fbc070);
  ${(p) => p.$tone === "off" && css`border-color: #cd923a;`}
  ${(p) => p.$tone === "red" && css`
    border-color: #5d0c0f;
    background: linear-gradient(#cb3338, #a62a2c);
  `}
  ${(p) => p.$tone === "halt" && css`
    border-color: #b9641b;
    background: linear-gradient(#ffb56e, #fd9a3f);
  `}
`;
function Btn({ w, h, tw, size, children, ...rest }) {
  return <Button $w={w} $h={h} {...rest}><Text w={tw} size={size} ml={1}>{children}</Text></Button>;
}

const Tabs = styled.div`
  width: 201px;
  height: 320px;
  flex: none;
  display: flex;
  flex-direction: column;
`;
const TabStrip = styled.div`
  height: 28px;
  flex: none;
  display: flex;
  align-items: flex-end;
`;
const Tab = styled.div`
  width: ${(p) => p.$w}px;
  height: ${(p) => (p.$on ? 28 : 25)}px;
  flex: none;
  display: flex;
  align-items: center;
  justify-content: ${(p) => (p.$clip ? "flex-start" : "center")};
  padding-left: ${(p) => (p.$clip ? 11 : 0)}px;
  overflow: hidden;
  margin-bottom: ${(p) => (p.$on ? 0 : 1)}px;
  border: 1px solid ${EDGE};
  border-width: 1px ${(p) => (p.$clip ? 0 : 1)}px 0 ${(p) => (p.$on ? 1 : 0)}px;
  border-radius: 3px 3px 0 0;
  background: ${(p) => (p.$on ? "linear-gradient(#ffd9a2, #fdca84)" : "linear-gradient(#efba76, #e9b36c)")};
`;
const TabScroll = styled.span`
  width: ${(p) => p.$w}px;
  height: 28px;
  flex: none;
  display: grid;
  place-items: center;
  border: solid #7a561d;
  border-width: 0 1px 1px 0;
  background: ${ORANGE};
`;
const Pane = styled.div`
  flex: 1;
  display: flex;
  flex-direction: column;
  align-items: flex-start;
  border: 1px solid ${EDGE};
  border-top-color: #fdca84;
`;

const Lcd = styled.div`
  width: ${(p) => p.$w}px;
  height: 31px;
  flex: none;
  background: ${(p) => p.$bg || "transparent"};
  ${(p) => p.$frame === "dark" && css`border: 2px solid #000; box-shadow: inset 0 0 0 2px #b9b4b0;`}
  ${(p) => p.$frame === "light" && css`
    border: 2px solid;
    border-color: #fdc06a #a5752a #a5752a #fdc06a;
    box-shadow: inset 0 0 0 2px #b9b4b0, inset 3px 3px 0 1px #a5752a;
  `}
`;
/* Seven segments per digit: a b c d e f clockwise from the top, g in the middle. */
const SEGMENTS = { 0: "abcdef", 1: "bc", 6: "acdefg", 8: "abcdefg" };
function Digits({ w, h, items, color, sw = 2 }) {
  return (
    <svg width={w} height={h} fill="none" stroke={color} strokeWidth={sw}>
      {items.map(({ n, x, y, dw, dh }, i) => {
        const m = y + dh / 2, r = x + dw, b = y + dh;
        const line = {
          a: `M${x + 1} ${y}H${r - 1}`, b: `M${r} ${y + 1}V${m - 2}`, c: `M${r} ${m + 2}V${b - 1}`,
          d: `M${x + 1} ${b}H${r - 1}`, e: `M${x} ${m + 2}V${b - 1}`, f: `M${x} ${y + 1}V${m - 2}`,
          g: `M${x + 1} ${m}H${r - 1}`,
        };
        return <path key={i} d={[...SEGMENTS[n]].map((s) => line[s]).join("")} />;
      })}
    </svg>
  );
}

const Keypad = styled.div`
  width: 113px;
  height: 25px;
  margin: 1px 0 0 20px;
  border: 1px solid #666a63;
  border-radius: 3px;
  background: #888a85;
`;
const Spin = styled.div`
  width: 81px;
  height: 39px;
  flex: none;
  margin: 2px 0 0 ${(p) => p.$ml || 0}px;
  display: flex;
  align-items: center;
  padding-left: 4px;
  border: 1px solid ${EDGE};
  border-radius: 3px;
`;
const SpinArrows = styled.span`
  width: 14px;
  height: 37px;
  margin-left: auto;
  display: flex;
  flex-direction: column;
  align-items: center;
  justify-content: space-between;
  padding: 8px 0;
  border-left: 1px solid ${EDGE};
  background: linear-gradient(#ffd59c, #fbc070);
`;
function SpinBox({ ml }) {
  return (
    <Spin $ml={ml}>
      <Text w={20}>0.5</Text>
      <SpinArrows>
        <Triangle w={7} h={4} dir="up" color="#5e4623" />
        <Triangle w={7} h={4} color="#5e4623" />
      </SpinArrows>
    </Spin>
  );
}
const Feed = styled.div`
  width: 171px;
  height: 131px;
  margin-top: 9px;
  background: #4169e1;
`;
const RoundCheck = styled.span`
  width: 16px;
  height: 16px;
  flex: none;
  border: 2px solid #cfc6ba;
  border-radius: 5px;
`;
const Input = styled.div`
  width: 131px;
  height: 31px;
  flex: none;
  border: 1px solid ${EDGE};
  border-radius: 3px;
`;

const Slider = styled.div`
  flex: none;
  display: flex;
  align-items: center;
  flex-direction: ${(p) => (p.$vertical ? "column" : "row")};
  margin: ${(p) => p.$m};
`;
const Groove = styled.span`
  width: ${(p) => p.$w}px;
  height: ${(p) => p.$h}px;
  flex: none;
  border-radius: 2px;
  border: 1px solid ${(p) => (p.$full ? "#1f6da6" : EDGE)};
  background: ${(p) => (p.$full ? "#42a8ea" : "#e3ae63")};
`;
const Knob = styled.span`
  width: 13px;
  height: 13px;
  flex: none;
  border: 1px solid ${EDGE};
  border-radius: 3px;
  background: linear-gradient(135deg, #ffdcaa, #fdc67e);
`;
const Ticks = styled.div`
  display: flex;
  flex: none;
  justify-content: space-between;
  flex-direction: ${(p) => (p.$vertical ? "column" : "row")};
  width: ${(p) => p.$w}px;
  height: ${(p) => p.$h}px;
  margin: ${(p) => p.$m};
`;
const Tick = styled.span`
  width: ${(p) => p.$w}px;
  height: ${(p) => p.$h}px;
  background: #b57f2e;
`;

function SlamTabs() {
  return (
    <Tabs>
      <TabStrip>
        <Tab $w={45} $on><Text w={19}>2D</Text></Tab>
        <Tab $w={44}><Text w={19}>3D</Text></Tab>
        <Tab $w={56}><Text w={31}>Path</Text></Tab>
        <Tab $w={25} $clip><Text w={31}>Data</Text></Tab>
        <TabScroll $w={15}><Triangle w={5} h={9} dir="left" color="#d5b27c" /></TabScroll>
        <TabScroll $w={16}><Triangle w={5} h={9} dir="right" color="#4a3310" /></TabScroll>
      </TabStrip>
      <Pane>
        <Text w={78} mt={10} ml={51}>SLAM LiDar</Text>
        <Btn w={191} h={51} tw={130} $ml={1}>Start Normal SLAM</Btn>
        <Text w={120} mt={8} ml={41}>Map Environment</Text>
        <Btn w={161} h={31} tw={96} $ml={21} $mt={11}>Start Mapping</Btn>
        <Row $gap={9} $mt={9} $ml={11}>
          <Btn w={81} h={31} tw={64}>Save Map</Btn>
          <Btn w={91} h={31} tw={65}>Load Map</Btn>
        </Row>
        <Text w={73} mt={38} ml={51}>Navigation</Text>
        <Btn w={161} h={31} tw={110} $ml={11} $mt={1}>Start Navigation</Btn>
      </Pane>
    </Tabs>
  );
}

function StatusArea() {
  return (
    <Col>
      <Row $h={91}>
        <Col $ml={19} $w={171}>
          <Text w={82} mt={9}>Power Level</Text>
          <Row $mt={1}>
            <Lcd $w={71} $bg="#000080">
              <Digits w={71} h={31} color="#e8e8f4" sw={2} items={[{ n: 0, x: 55, y: 7, dw: 7, dh: 17 }]} />
            </Lcd>
            <Text w={43} ml={9} mt={11}>VOLTS</Text>
          </Row>
        </Col>
        <Col>
          <Row $ml={39} $h={25}>
            <Row $w={130}><Text w={117} size={16.2}>Signal Strength</Text></Row>
            <Btn w={91} h={25} tw={73}>Show/Hide</Btn>
          </Row>
          <Row>
            <Col $w={139}>
              <Text w={66} mt={6} ml={-1}>Big Robot</Text>
              <Row $mt={9} $ml={9}>
                <Lcd $w={61} $bg="#000" $frame="dark">
                  <Digits w={57} h={27} color="#00f51b" items={[{ n: 6, x: 23, y: 2, dw: 9, dh: 22 }, { n: 8, x: 37, y: 2, dw: 9, dh: 22 }]} />
                </Lcd>
              </Row>
            </Col>
            <Col>
              <Text w={82} mt={4}>Small Robot</Text>
              <Row $mt={11} $ml={20}>
                <Lcd $w={61} $frame="light">
                  <Digits w={57} h={27} color="#000" items={[{ n: 1, x: 9, y: 2, dw: 9, dh: 22 }, { n: 0, x: 23, y: 2, dw: 9, dh: 22 }, { n: 0, x: 37, y: 2, dw: 9, dh: 22 }]} />
                </Lcd>
              </Row>
            </Col>
          </Row>
        </Col>
      </Row>
      <Col $mt={69} $ml={59}>
        <Btn w={161} h={23} tw={114}>Enable Keyboard</Btn>
        <Text w={87} ml={20} mt={6}>Control Here</Text>
        <Keypad />
      </Col>
      <Row $mt={14} $ml={19}>
        <Col $w={130}>
          <Text w={85}>Angular Max</Text>
          <SpinBox ml={10} />
        </Col>
        <Col>
          <Text w={74}>Linear Max</Text>
          <SpinBox />
        </Col>
      </Row>
    </Col>
  );
}

function Actions() {
  return (
    <Row $gap={9} $ml={10}>
      <Col $w={171}>
        <Text w={30} mt={9} ml={70}>Misc</Text>
        <Row $mt={1} $ml={10} $gap={19}>
          <Button $w={71} $h={31} $tone="red" $clip><Text w={66} ml={4} size={16.2}>STOP OP</Text></Button>
          <Button $w={71} $h={31} $tone="halt"><Text w={40} ml={6} size={16.2}>HALT</Text></Button>
        </Row>
        <Feed />
        <Row $mt={10} $gap={6} $align="center"><RoundCheck /><Text w={103} color="#fff">Launch Camera</Text></Row>
      </Col>
      <Col $gap={9} $mt={20}>
        <Btn w={161} h={41} tw={131} size={16.2}>Object Detection</Btn>
        <Btn w={161} h={41} tw={136} size={16.2}>Skeleton Tracking</Btn>
        <Btn w={161} h={41} tw={139} size={16}>Open Cam Browser</Btn>
        <Btn w={161} h={41} tw={59}>Follower</Btn>
        <Btn w={161} h={41} tw={103}>Visual Follower</Btn>
      </Col>
      <Col $gap={9} $mt={20}>
        <Btn w={161} h={41} tw={118}>Show Parameters</Btn>
        <Btn w={161} h={41} tw={121}>Recorder Window</Btn>
        <Btn w={161} h={41} tw={128}>Movement Control</Btn>
        <Btn w={181} h={31} tw={163} $mt={20}>Kill Lidar (Experimental)</Btn>
        <Btn w={181} h={31} tw={94} $tone="off">Turn ON Lidar</Btn>
      </Col>
    </Row>
  );
}

function Coordinates() {
  return (
    <Col $mt={28}>
      <Text w={82} ml={220}>Coordinates</Text>
      <Row $mt={11} $ml={60}>
        <Row $w={20}><Text w={9} mt={9}>X</Text></Row>
        <Input />
        <Row $ml={89} $w={20}><Text w={9} mt={9}>Y</Text></Row>
        <Input />
      </Row>
      <Btn w={131} h={25} tw={122} $mt={9} $ml={220}>Show Coordinates</Btn>
      <Btn w={151} h={25} tw={143} $mt={5} $ml={210}>Turn Off Coordinates</Btn>
    </Col>
  );
}

function Drive() {
  const vTicks = Array.from({ length: 21 });
  const hTicks = Array.from({ length: 61 });
  return (
    <Col $mt={10} $w={290}>
      <Row $h={461}>
        <Btn w={31} h={25} tw={8} $mt={220} $ml={50}>0</Btn>
        <Slider $vertical $m="1px 0 0 9px">
          <Groove $w={5} $h={223} />
          <Knob />
          <Groove $w={5} $h={223} $full />
        </Slider>
        <Ticks $vertical $w={4} $h={447} $m="7px 10px 0 23px">
          {vTicks.map((_, i) => <Tick key={i} $w={i % 20 ? 3 : 4} $h={1} />)}
        </Ticks>
        <Col $w={50}>
          <Btn w={31} h={21} tw={8} size={13}>+</Btn>
          <Text w={48} mt={198}>0.0 m/s</Text>
          <Btn w={31} h={21} tw={5} $mt={201}>-</Btn>
        </Col>
        <Btn w={89} h={25} tw={31}>Stop</Btn>
      </Row>
      <Row $mt={19} $gap={159}>
        <Btn w={31} h={21} tw={8} size={13}>&lt;</Btn>
        <Btn w={31} h={21} tw={8} size={13}>&gt;</Btn>
      </Row>
      <Ticks $w={197} $h={4} $m="10px 0 0 7px">
        {hTicks.map((_, i) => <Tick key={i} $w={1} $h={i % 60 ? 3 : 4} />)}
      </Ticks>
      <Slider $m="2px 0 0 1px">
        <Groove $w={98} $h={5} />
        <Knob />
        <Groove $w={98} $h={5} $full />
      </Slider>
      <Btn w={31} h={25} tw={8} $mt={10} $ml={90}>0</Btn>
      <Text w={48} mt={4} ml={70}>0.0 m/s</Text>
    </Col>
  );
}

const LeftForm = styled.div`
  width: 690px;
  flex: none;
  display: flex;
  flex-direction: column;
`;

export default function App() {
  return (
    <Screen>
      <Global />
      <TopBar>
        <TopLeft>
          <Text w={68} bold>Activities</Text>
          <Row $ml={19}><RqtIcon size={14} /></Row>
          <Text w={21} ml={7} bold>rqt</Text>
          <Triangle ml={5} />
        </TopLeft>
        <Text w={93.5} bold>Mon  2:56 PM</Text>
        <Row $ml={2}><svg width="8" height="8"><circle cx="4" cy="4" r="3.700" fill="#dfdbd2" /></svg></Row>
        <TopRight>
          <WifiIcon />
          <Row $ml={12}><VolumeIcon /></Row>
          <Row $ml={14}><BatteryIcon /></Row>
          <Triangle ml={12} />
        </TopRight>
      </TopBar>
      <Body>
        <Dock>
          {DOCK.map(([icon, running, active], i) => (
            <DockTile key={i} $lift={i < 2 ? 2 : 0}>
              <DockInner>
                <RunDot $on={running} />
                <DockFace $active={active}>{icon}</DockFace>
              </DockInner>
            </DockTile>
          ))}
          <AppsButton><AppsGrid /></AppsButton>
        </Dock>
        <Window>
          <TitleBar>
            <span />
            <Text w={88} bold>Default - rqt</Text>
            <WinButtons>
              <WinButton><svg width="8" height="8"><path d="M0 4.500h8" stroke="#3c3b37" /></svg></WinButton>
              <WinButton><svg width="8" height="8"><rect x=".5" y="1.500" width="7" height="5" fill="none" stroke="#3c3b37" /></svg></WinButton>
              <WinButton $close><svg width="6" height="6"><path d="M0 0l6 6M6 0L0 6" stroke="#3c2a20" strokeWidth="1.200" /></svg></WinButton>
            </WinButtons>
          </TitleBar>
          <MenuBar $h={22}>
            <Text w={24}><U>F</U>ile</Text>
            <Text w={49} ml={13}><U>P</U>lugins</Text>
            <Text w={56} ml={13}><U>R</U>unning</Text>
            <Text w={86} ml={14}>P<U>e</U>rspectives</Text>
            <Text w={32} ml={13}><U>H</U>elp</Text>
          </MenuBar>
          <Panels>
            <RvizPanel />
            <Form>
              <DockTitle $pr={2}>
                <HelpIcon />
                <Text w={34}>Form</Text>
                <Tools />
              </DockTitle>
              <Sheet>
                <LeftForm>
                  <Row>
                    <SlamTabs />
                    <StatusArea />
                  </Row>
                  <Actions />
                  <Coordinates />
                </LeftForm>
                <Drive />
              </Sheet>
            </Form>
          </Panels>
        </Window>
      </Body>
    </Screen>
  );
}
